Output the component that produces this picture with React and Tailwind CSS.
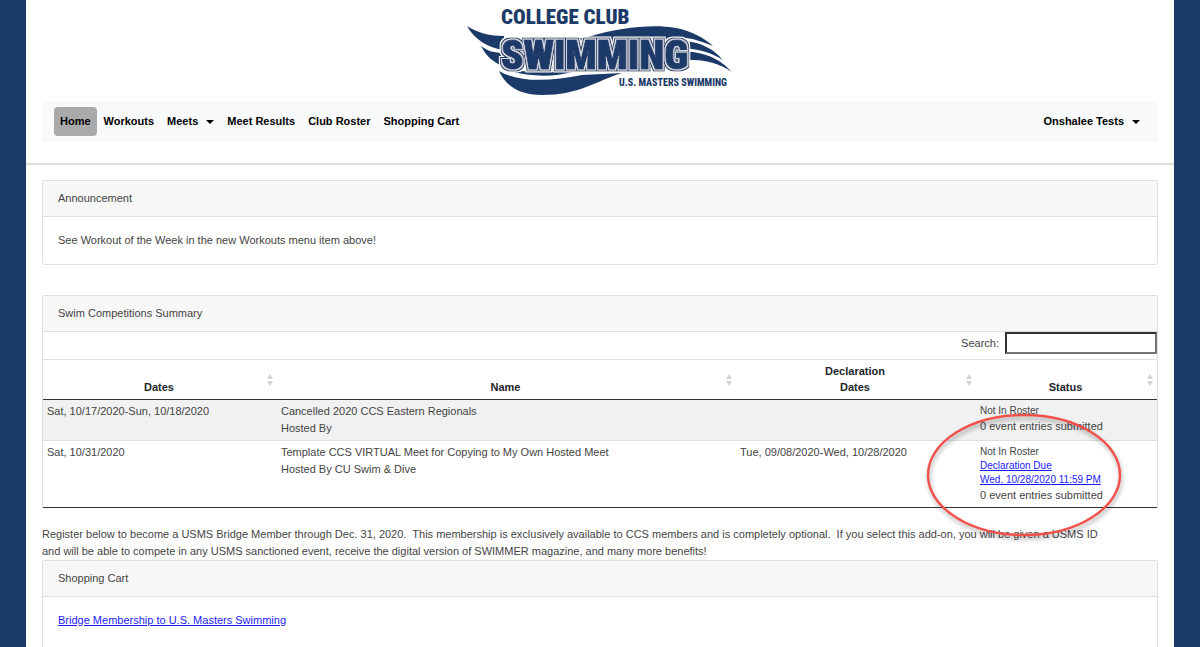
import React, { useState } from "react";

const navItems = [
  { label: "Home", active: true },
  { label: "Workouts" },
  { label: "Meets", menu: true },
  { label: "Meet Results" },
  { label: "Club Roster" },
  { label: "Shopping Cart" },
];

const meets = [
  {
    dates: "Sat, 10/17/2020-Sun, 10/18/2020",
    name: "Cancelled 2020 CCS Eastern Regionals",
    host: "Hosted By",
    declaration: "",
    entries: "0 event entries submitted",
  },
  {
    dates: "Sat, 10/31/2020",
    name: "Template CCS VIRTUAL Meet for Copying to My Own Hosted Meet",
    host: "Hosted By CU Swim & Dive",
    declaration: "Tue, 09/08/2020-Wed, 10/28/2020",
    due: "Wed, 10/28/2020 11:59 PM",
    entries: "0 event entries submitted",
  },
];

const Logo = () => (
  <svg
    width="280"
    height="100"
    viewBox="0 0 280 100"
    role="img"
    aria-label="College Club Swimming"
    fill="#1b3a68"
    fontFamily="'Roboto Condensed', Roboto, sans-serif"
    fontWeight="900"
  >
    <defs>
      {/* alternating white / navy / white bands round the lettering */}
      <filter id="outline" x="-10%" y="-20%" width="120%" height="140%">
        <feMorphology in="SourceAlpha" operator="dilate" radius="3" result="outer" />
        <feFlood floodColor="#fff" />
        <feComposite in2="outer" operator="in" result="white" />
        <feMorphology in="SourceAlpha" operator="dilate" radius="2" result="mid" />
        <feFlood floodColor="#1b3a68" />
        <feComposite in2="mid" operator="in" result="navy" />
        <feMorphology in="SourceAlpha" operator="dilate" radius="1" result="inner" />
        <feFlood floodColor="#d5dce8" />
        <feComposite in2="inner" operator="in" result="pale" />
        <feMerge>
          <feMergeNode in="white" />
          <feMergeNode in="navy" />
          <feMergeNode in="pale" />
          <feMergeNode in="SourceGraphic" />
        </feMerge>
      </filter>
    </defs>
    {/* left wave tips */}
    <path d="M7 26 C18 33 30 36 44 36 L44 50 C28 48 14 39 7 26Z" />
    <path d="M21 46 C28 51 34 53 44 53 L44 67 C33 62 26 56 21 46Z" />
    {/* bottom wave */}
    <path d="M39 71 C58 82 88 82 122 75 L162 73 C136 81 119 95 82 95 C59 95 46 86 39 71Z" />
    <path d="M50 71 L112 72 C95 77 70 77 50 71Z" />
    {/* right wave */}
    <path d="M128 37 C160 27 194 24 216 28 C232 31 244 38 253 46 C243 42 235 39 226 38 L226 42 L128 42Z" />
    <path d="M222 41 C243 42 254 50 263 60 C250 52 239 49 222 48Z" />
    <path d="M222 51 C246 52 260 59 272 72 C258 63 244 59 222 60Z" />
    <text x="41" y="24" fontSize="21">COLLEGE CLUB</text>
    {/* water behind the lettering */}
    <path d="M48 42 C80 52 100 40 134 36 L224 36 L224 68 L60 68Z" />
    <text x="41" y="69" fontSize="41" stroke="#1b3a68" strokeWidth="1" filter="url(#outline)">
      SWIMMING
    </text>
    <text x="159" y="86" fontSize="10" fontWeight="800">U.S. MASTERS SWIMMING</text>
  </svg>
);

const Caret = () => (
  <svg width="8" height="4" viewBox="0 0 8 4" className="ml-2 inline-block align-middle">
    <path d="M0 0h8L4 4z" fill="currentColor" />
  </svg>
);

const SortIcon = () => (
  <svg width="6" height="12" viewBox="0 0 6 12" fill="#d4d4d4">
    <path d="M3 0l3 5H0zM3 12l3-5H0z" />
  </svg>
);

const CardHeader = ({ children }) => (
  <h2 className="border-b border-[#dfdfdf] bg-[#f7f7f7] px-[15px] py-[9px]">
    {children}
  </h2>
);

const HeaderCell = ({ children, className = "" }) => (
  <th className={`p-0 align-bottom font-bold text-[#212529] ${className}`}>
    <button type="button" className="flex h-[39px] w-full items-center pr-1 pl-2 font-bold">
      <span className="flex-1 self-end pb-1 text-center leading-4">{children}</span>
      <SortIcon />
    </button>
  </th>
);

const Highlight = () => (
  <svg
    width="200"
    height="132"
    viewBox="0 0 200 132"
    className="pointer-events-none absolute -top-[31px] -left-[52px] z-10 drop-shadow-[1px_3px_2px_rgba(0,0,0,0.35)]"
  >
    <ellipse cx="100" cy="65" rx="96" ry="60" fill="none" stroke="#f2504b" strokeWidth="2.4" />
  </svg>
);

const App = () => {
  const [search, setSearch] = useState("");

  return (
    <div className="min-h-screen bg-[#1b3a68] px-[26px] font-['Liberation_Sans',Arial,sans-serif] text-[11px] leading-[17px] text-[#444]">
      <div className="min-h-screen overflow-hidden bg-white">
        <header className="border-b-2 border-[#dfdfdf] px-4 pb-[21px]">
          <div className="flex justify-center">
            <Logo />
          </div>
          <nav className="mt-px flex items-center justify-between bg-[#f8f9fb] px-3 py-[6px] font-bold text-black">
            <ul className="flex gap-px">
              {navItems.map((item) => (
                <li key={item.label}>
                  <a
                    href="#"
                    className={`block rounded-sm px-[6px] py-[6px] ${item.active ? "bg-[#aaa]" : ""}`}
                  >
                    {item.label}
                    {item.menu && <Caret />}
                  </a>
                </li>
              ))}
            </ul>
            <a href="#" className="px-[6px]">
              Onshalee Tests
              <Caret />
            </a>
          </nav>
        </header>

        <main className="px-4 pt-[15px]">
          <section className="overflow-hidden rounded-[3px] border border-[#dfdfdf]">
            <CardHeader>Announcement</CardHeader>
            <p className="px-[15px] py-[15px]">
              See Workout of the Week in the new Workouts menu item above!
            </p>
          </section>

          <section className="mt-[30px] rounded-t-[3px] border border-b-0 border-[#dfdfdf]">
            <CardHeader>Swim Competitions Summary</CardHeader>
            <div className="flex justify-end pb-[5px]">
              <label className="flex items-center gap-[6px]">
                Search:
                <input
                  type="search"
                  value={search}
                  onChange={(e) => setSearch(e.target.value)}
                  className="h-[22px] w-[152px] border-2 border-[#767676] border-t-[#333] border-l-[#333] bg-white px-1"
                />
              </label>
            </div>
            <table className="w-full table-fixed border-collapse border-t border-b border-t-[#dfdfdf] border-b-[#333]">
              <thead>
                <tr className="border-b border-[#333]">
                  <HeaderCell className="w-[21%]">Dates</HeaderCell>
                  <HeaderCell>Name</HeaderCell>
                  <HeaderCell className="w-[240px]">
                    Declaration
                    <br />
                    Dates
                  </HeaderCell>
                  <HeaderCell className="w-[181px]">Status</HeaderCell>
                </tr>
              </thead>
              <tbody>
                {meets.map((meet) => (
                  <tr
                    key={meet.name}
                    className="border-t border-[#dfdfdf] align-top first:border-t-[#333] odd:bg-[#f1f1f1]"
                  >
                    <td className="px-1 py-[3px]">{meet.dates}</td>
                    <td className="px-1 py-[3px]">
                      {meet.name}
                      <br />
                      {meet.host}
                    </td>
                    <td className="px-1 py-[3px]">{meet.declaration}</td>
                    <td className="relative px-1 pt-1 pb-[3px]">
                      <div className="text-[10px] leading-[14px]">
                        Not In Roster
                        {meet.due && (
                          <a href="#" className="block text-[#1a1aff] underline">
                            Declaration Due
                            <br />
                            {meet.due}
                          </a>
                        )}
                      </div>
                      {meet.entries}
                      {meet.due && <Highlight />}
                    </td>
                  </tr>
                ))}
              </tbody>
            </table>
          </section>

          <p className="mt-[18px]">
            Register below to become a USMS Bridge Member through Dec. 31, 2020.&nbsp; This
            membership is exclusively available to CCS members and is completely optional.&nbsp; If
            you select this add-on, you will be given a USMS ID
            <br />
            and will be able to compete in any USMS sanctioned event, receive the digital version
            of SWIMMER magazine, and many more benefits!
          </p>

          <section className="rounded-t-[3px] border border-b-0 border-[#dfdfdf]">
            <CardHeader>Shopping Cart</CardHeader>
            <div className="p-[15px] pb-8">
              <a href="#" className="text-[#1a1aff] underline">
                Bridge Membership to U.S. Masters Swimming
              </a>
            </div>
          </section>
        </main>
      </div>
    </div>
  );
};

export default App;
